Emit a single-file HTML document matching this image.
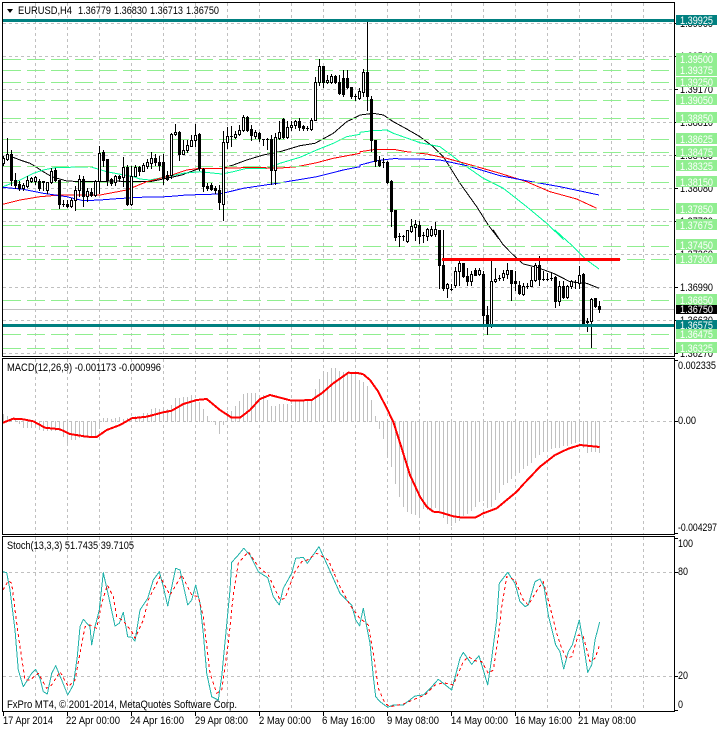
<!DOCTYPE html>
<html lang="en">
<head>
<meta charset="utf-8">
<title>EURUSD,H4</title>
<style>
html,body{margin:0;padding:0;background:#fff;width:717px;height:729px;overflow:hidden}
svg{display:block;position:absolute;left:0;top:0}
text{font-family:"Liberation Sans",sans-serif;font-size:11px;fill:#000}
.w{fill:#fff}
</style>
</head>
<body>
<svg id="s" xmlns="http://www.w3.org/2000/svg" width="717" height="729" viewBox="0 0 717 729">
<g id="grid"></g>
<g id="ma"></g>
<g id="levels"></g>
<g id="candles"></g>
<g id="over"></g>
<g id="frame"></g>

<polygon points="7,9 13,9 10,13" fill="#000"/>
<text x="18" y="14" textLength="54" lengthAdjust="spacingAndGlyphs">EURUSD,H4</text>
<text x="78" y="14" textLength="33" lengthAdjust="spacingAndGlyphs">1.36779</text>
<text x="114" y="14" textLength="33" lengthAdjust="spacingAndGlyphs">1.36830</text>
<text x="150" y="14" textLength="33" lengthAdjust="spacingAndGlyphs">1.36713</text>
<text x="186" y="14" textLength="33" lengthAdjust="spacingAndGlyphs">1.36750</text>

<text x="680" y="27" textLength="33" lengthAdjust="spacingAndGlyphs">1.39900</text>
<text x="680" y="60" textLength="33" lengthAdjust="spacingAndGlyphs">1.39540</text>
<text x="680" y="93" textLength="33" lengthAdjust="spacingAndGlyphs">1.39170</text>
<text x="680" y="126" textLength="33" lengthAdjust="spacingAndGlyphs">1.38810</text>
<text x="680" y="159" textLength="33" lengthAdjust="spacingAndGlyphs">1.38450</text>
<text x="680" y="192" textLength="33" lengthAdjust="spacingAndGlyphs">1.38080</text>
<text x="680" y="225" textLength="33" lengthAdjust="spacingAndGlyphs">1.37720</text>
<text x="680" y="258" textLength="33" lengthAdjust="spacingAndGlyphs">1.37360</text>
<text x="680" y="291" textLength="33" lengthAdjust="spacingAndGlyphs">1.36990</text>
<text x="680" y="324" textLength="33" lengthAdjust="spacingAndGlyphs">1.36630</text>
<text x="680" y="357" textLength="33" lengthAdjust="spacingAndGlyphs">1.36270</text>

<rect x="676" y="15" width="41" height="10" fill="#008080"/>
<rect x="676" y="53" width="41" height="12" fill="#90ee90"/>
<rect x="676" y="65" width="41" height="11" fill="#90ee90"/>
<rect x="676" y="77" width="41" height="10" fill="#90ee90"/>
<rect x="676" y="94" width="41" height="11" fill="#90ee90"/>
<rect x="676" y="112" width="41" height="11" fill="#90ee90"/>
<rect x="676" y="133" width="41" height="11" fill="#90ee90"/>
<rect x="676" y="146" width="41" height="11" fill="#90ee90"/>
<rect x="676" y="160" width="41" height="11" fill="#90ee90"/>
<rect x="676" y="176" width="41" height="11" fill="#90ee90"/>
<rect x="676" y="203" width="41" height="11" fill="#90ee90"/>
<rect x="676" y="219" width="41" height="11" fill="#90ee90"/>
<rect x="676" y="239" width="41" height="11" fill="#90ee90"/>
<rect x="676" y="253" width="41" height="11" fill="#90ee90"/>
<rect x="676" y="294" width="41" height="11" fill="#90ee90"/>
<rect x="676" y="305" width="41" height="9" fill="#000"/>
<rect x="676" y="329" width="41" height="10" fill="#90ee90"/>
<rect x="676" y="342" width="41" height="11" fill="#90ee90"/>
<rect x="676" y="320" width="41" height="9" fill="#008080"/>

<text class="w" x="680" y="24" textLength="33" lengthAdjust="spacingAndGlyphs">1.39925</text>
<text class="w" x="680" y="63" textLength="33" lengthAdjust="spacingAndGlyphs">1.39500</text>
<text class="w" x="680" y="74" textLength="33" lengthAdjust="spacingAndGlyphs">1.39375</text>
<text class="w" x="680" y="86" textLength="33" lengthAdjust="spacingAndGlyphs">1.39250</text>
<text class="w" x="680" y="104" textLength="33" lengthAdjust="spacingAndGlyphs">1.39050</text>
<text class="w" x="680" y="122" textLength="33" lengthAdjust="spacingAndGlyphs">1.38850</text>
<text class="w" x="680" y="143" textLength="33" lengthAdjust="spacingAndGlyphs">1.38625</text>
<text class="w" x="680" y="156" textLength="33" lengthAdjust="spacingAndGlyphs">1.38475</text>
<text class="w" x="680" y="170" textLength="33" lengthAdjust="spacingAndGlyphs">1.38325</text>
<text class="w" x="680" y="186" textLength="33" lengthAdjust="spacingAndGlyphs">1.38150</text>
<text class="w" x="680" y="213" textLength="33" lengthAdjust="spacingAndGlyphs">1.37850</text>
<text class="w" x="680" y="229" textLength="33" lengthAdjust="spacingAndGlyphs">1.37675</text>
<text class="w" x="680" y="249" textLength="33" lengthAdjust="spacingAndGlyphs">1.37450</text>
<text class="w" x="680" y="263" textLength="33" lengthAdjust="spacingAndGlyphs">1.37300</text>
<text class="w" x="680" y="304" textLength="33" lengthAdjust="spacingAndGlyphs">1.36850</text>
<text class="w" x="680" y="313" textLength="33" lengthAdjust="spacingAndGlyphs">1.36750</text>
<text class="w" x="680" y="338" textLength="33" lengthAdjust="spacingAndGlyphs">1.36475</text>
<text class="w" x="680" y="352" textLength="33" lengthAdjust="spacingAndGlyphs">1.36325</text>
<text class="w" x="680" y="329" textLength="33" lengthAdjust="spacingAndGlyphs">1.36575</text>

<text x="7" y="371" textLength="154" lengthAdjust="spacingAndGlyphs">MACD(12,26,9) -0.001173 -0.000996</text>
<text x="678" y="369" textLength="38" lengthAdjust="spacingAndGlyphs">0.002335</text>
<text x="678" y="424" textLength="18" lengthAdjust="spacingAndGlyphs">0.00</text>
<text x="678" y="531" textLength="39" lengthAdjust="spacingAndGlyphs">-0.004297</text>

<text x="7" y="549" textLength="127" lengthAdjust="spacingAndGlyphs">Stoch(13,3,3) 51.7435 39.7105</text>
<text x="7" y="708" textLength="230" lengthAdjust="spacingAndGlyphs">FxPro MT4, © 2001-2014, MetaQuotes Software Corp.</text>
<text x="678" y="547" textLength="15" lengthAdjust="spacingAndGlyphs">100</text>
<text x="678" y="575" textLength="10" lengthAdjust="spacingAndGlyphs">80</text>
<text x="678" y="679" textLength="10" lengthAdjust="spacingAndGlyphs">20</text>
<text x="678" y="708" textLength="5" lengthAdjust="spacingAndGlyphs">0</text>

<text x="3" y="724" textLength="50" lengthAdjust="spacingAndGlyphs">17 Apr 2014</text>
<text x="66" y="724" textLength="54" lengthAdjust="spacingAndGlyphs">22 Apr 00:00</text>
<text x="130" y="724" textLength="54" lengthAdjust="spacingAndGlyphs">24 Apr 16:00</text>
<text x="195" y="724" textLength="53" lengthAdjust="spacingAndGlyphs">29 Apr 08:00</text>
<text x="259" y="724" textLength="52" lengthAdjust="spacingAndGlyphs">2 May 00:00</text>
<text x="322" y="724" textLength="53" lengthAdjust="spacingAndGlyphs">6 May 16:00</text>
<text x="387" y="724" textLength="52" lengthAdjust="spacingAndGlyphs">9 May 08:00</text>
<text x="451" y="724" textLength="57" lengthAdjust="spacingAndGlyphs">14 May 00:00</text>
<text x="515" y="724" textLength="57" lengthAdjust="spacingAndGlyphs">16 May 16:00</text>
<text x="578" y="724" textLength="58" lengthAdjust="spacingAndGlyphs">21 May 08:00</text>
</svg>
<script>
(function(){
var NS="http://www.w3.org/2000/svg";
function E(parent,tag,attrs){var e=document.createElementNS(NS,tag);for(var k in attrs)e.setAttribute(k,attrs[k]);document.getElementById(parent).appendChild(e);return e;}
function R(p,x,y,w,h,f){return E(p,"rect",{x:x,y:y,width:w,height:h,fill:f});}
function HL(p,y,x1,x2,c,d){var a={x1:x1,y1:y+.5,x2:x2,y2:y+.5,stroke:c,"stroke-width":1,"shape-rendering":"crispEdges"};if(d)a["stroke-dasharray"]=d;return E(p,"line",a);}
function VL(p,x,y1,y2,c,d){var a={x1:x+.5,y1:y1,x2:x+.5,y2:y2,stroke:c,"stroke-width":1,"shape-rendering":"crispEdges"};if(d)a["stroke-dasharray"]=d;return E(p,"line",a);}
var G="#c0c0c0";
/* vertical grid */
for(var i=0;i<20;i++){var x=35+32*i;
  VL("grid",x,3,356,G,"3 3");VL("grid",x,359,534,G,"3 3");VL("grid",x,537,711,G,"3 3");}
/* horizontal grid */
[23,56,89,122,155,188,221,254,287,320,353].forEach(function(y){HL("grid",y,3,674,G,"3 3");});
HL("grid",421,3,674,G,"3 3");HL("grid",572,3,674,G,"3 3");HL("grid",676,3,674,G,"3 3");
/* last-price line */
HL("grid",309,3,674,G);

/* polylines: segments given in 3x zoom coordinates */
function PL(p,segs,color,w,dash,crisp){
  var pts=[];
  segs.forEach(function(s){var a=s[0],dx=s[1],dy=s[2];
    for(var i=0;i<a.length;i+=2)pts.push(((a[i]+dx)/3).toFixed(1)+","+((a[i+1]+dy)/3).toFixed(1));});
  var at={points:pts.join(" "),fill:"none",stroke:color,"stroke-width":w,"stroke-linejoin":"round"};
  if(dash)at["stroke-dasharray"]=dash;
  if(crisp)at["shape-rendering"]="crispEdges";
  return E(p,"polyline",at);
}
var Z=1080;
PL("ma",[[[35,470,60,480,90,490,107,500,130,515,155,530,200,543,250,545,290,545,340,543,400,545,450,545,500,535,545,525,600,505,665,505,700,495,740,480,790,465,840,455,900,437,945,430,1000,400,1040,365,1075,348],0,0],
 [[0,345,40,340,70,345,100,365,140,387,180,410,220,440,250,470,275,510,300,550,350,620,385,675,415,715],Z,0],
 [[400,0,430,45,465,80,490,102,530,112,580,130,630,155,680,160,717,175],Z,690]],"#000",1,null,true);
PL("ma",[[[9,560,60,540,100,520,130,510,165,503,270,500,320,515,400,530,420,537,450,540,500,530,550,520,600,515,665,522,700,515,740,505,800,505,840,490,900,472,950,450,1000,430,1040,410,1080,403],0,0],
 [[0,397,40,392,80,390,100,400,180,428,240,440,280,470,320,500,370,535,430,565,500,620,560,670,610,718],Z,0],
 [[585,0,640,50,680,90,717,117],Z,690]],"#00fa9a",1,null,true);
PL("ma",[[[9,613,60,600,120,590,180,585,300,585,380,570,440,545,500,530,560,510,600,505,665,505,770,502,830,505,890,500,950,488,1000,475,1080,460],0,0],
 [[0,455,40,449,100,448,140,455,200,462,260,475,340,497,420,520,500,545,570,575,650,597,710,625],Z,0]],"#f00",1,null,true);
PL("ma",[[[9,562,70,568,130,580,200,590,250,602,300,600,350,596,420,592,500,590,560,585,660,582,730,565,843,548,867,544,950,530,1030,510,1080,500],0,0],
 [[0,495,50,482,100,476,180,477,240,480,320,497,420,527,520,546,600,560,717,585],Z,0]],"#00f",1,null,true);

/* green level lines */
[59,70,82,100,118,139,152,166,182,209,225,246,259,300,334,348].forEach(function(y){HL("levels",y,3,674,"#90ee90","18 6");});

/* candles: [wickTop, bodyTop, bodyBottom, wickBottom, isWhite] in 3x zoom y units */
var C=[
[470,475,490,495,1],[415,463,478,480,1],[452,463,540,555,0],[520,540,556,565,0],[545,552,565,570,0],[550,555,565,570,1],[530,540,558,562,1],[533,535,545,548,1],[530,533,545,553,1],[538,543,565,570,0],
[545,545,548,570,0],[546,546,570,580,1],[505,515,548,550,1],[505,512,542,545,0],[540,540,614,625,0],[600,612,612,620,0],[600,613,618,622,0],[595,600,618,622,1],[560,570,600,632,1],[525,538,570,590,1],
[530,538,590,620,0],[565,575,590,605,1],[565,576,585,590,0],[540,545,585,590,1],[440,460,545,580,1],[452,457,480,500,0],[478,478,540,555,0],[535,538,550,555,0],[525,530,548,555,1],[525,530,535,545,0],
[472,503,532,560,1],[497,501,612,615,0],[498,528,612,615,1],[495,503,528,530,1],[498,503,515,525,0],[490,495,515,515,1],[478,488,498,505,1],[458,475,490,505,1],[462,475,488,495,0],[470,487,497,510,0],
[462,487,535,552,0],[515,525,537,540,0],[400,403,525,535,1],[372,397,403,405,1],[395,397,463,480,0],[420,452,462,462,1],[420,435,452,458,1],[405,420,438,440,1],[372,405,422,440,1],[400,403,505,512,0],
[505,507,560,575,0],[550,558,564,570,0],[550,556,568,570,0],[560,565,572,580,0],[555,572,606,628,0],[395,428,613,662,1],[382,410,428,445,1],[380,408,410,440,0],[395,403,411,415,1],[375,390,403,405,1],
[345,353,392,395,1],[348,353,390,395,0],[375,388,405,420,0],[392,398,408,415,1],[398,400,416,425,0],[418,418,418,435,0],[415,418,418,448,0],[405,417,512,552,0],[400,413,512,552,1],[365,398,415,418,1],
[355,357,413,415,0],[365,381,413,415,1],[365,375,382,392,1],[360,363,377,385,1],[355,363,383,390,0],[375,380,386,392,0],[378,385,385,392,0],[355,360,388,390,1],[232,246,362,362,1],[178,198,248,255,1],
[198,198,248,263,0],[225,240,248,250,1],[222,228,248,250,1],[225,228,248,250,0],[225,248,280,282,0],[212,235,283,290,0],[212,235,262,265,0],[262,262,290,295,0],[282,290,290,300,0],[265,275,295,298,1],
[208,216,278,290,1],[60,216,290,332,0],[290,297,422,455,0],[420,420,483,500,0],[468,480,495,500,0],[475,488,488,503,0],[485,487,548,550,0],[542,545,635,678,0],[630,630,711,720,0],[699,708,708,738,0],
[705,708,708,720,0],[690,690,723,726,1],[657,678,693,696,1],[660,672,681,720,1],[663,675,708,729,0],[696,705,705,726,0],[684,687,708,720,1],[678,687,705,708,1],[666,687,702,708,1],[690,690,795,864,0],
[690,795,864,870,0],[849,853,865,893,1],[853,868,868,872,0],[802,815,855,862,1],[778,790,815,855,1],[790,790,830,833,0],[805,830,845,855,0],[815,822,845,855,1],[805,812,825,827,0],[805,812,823,825,1],
[815,822,945,975,0],[920,945,980,1003,0],[775,843,980,983,1],[805,837,845,847,1],[825,835,835,840,0],[810,820,833,840,1],[790,812,823,835,1],[810,812,850,902,0],[815,845,850,870,0],[845,855,880,883,0],
[850,860,883,885,1],[850,858,858,865,0],[802,840,858,860,1],[790,797,842,845,1],[768,797,837,857,0],[815,837,837,840,0],[820,837,837,842,0],[818,835,835,840,0],[830,832,905,922,0],[845,860,905,915,1],
[845,860,893,895,0],[855,858,893,895,1],[840,845,860,865,1],[840,848,848,865,0],[798,825,850,865,1],[820,823,973,975,0],[955,963,967,995,0],[895,897,965,1043,1],[895,895,920,922,0],[905,920,928,938,0]
];
C.forEach(function(c,k){
  var x=3+4*k,t=Math.floor(c[0]/3),a=Math.floor(c[1]/3),b=Math.floor(c[2]/3),d=Math.floor(c[3]/3);
  if(d>t)R("candles",x,t,1,d-t+1,"#000");
  var h=Math.max(1,b-a+1);
  R("candles",x-1,a,3,h,"#000");
  if(c[4]&&h>2)R("candles",x,a+1,1,h-2,"#fff");
});

/* teal and red objects */
R("over",3,19,672,3,"#008080");
R("over",3,324,672,3,"#008080");
R("over",442,258,178,3,"#f00");

/* MACD histogram */
var H=[192,198,205,208,218,232,232,232,225,238,240,240,240,240,240,258,278,268,266,262,262,260,258,255,235,205,203,207,205,200,207,205,200,198,198,190,188,178,175,178,172,178,165,145,145,142,142,135,148,155,178,197,212,222,248,222,183,183,168,153,132,128,128,128,135,135,150,167,167,162,162,162,165,150,150,150,150,150,118,88,72,65,55,55,62,65,68,72,68,90,
95,108,150,198,233,263,313,348,400,437,468,483,490,492,495,475,478,478,470,480,500,520,525,515,510,495,490,480,467,453,450,470,468,447,425,403,395,383,373,365,353,345,335,322,312,302,295,295,290,292,285,285,280,275,272,290,305,303,303,305];
H.forEach(function(z,k){
  var y=350+Math.round(z/3),x=3+4*k,top=Math.min(y,421),bot=Math.max(y,421);
  R("ma",x,top,1,bot-top+1,"#c0c0c0");
});
var g="ma";
PL(g,[[[9,218,40,206,70,208,100,214,135,233,180,238,210,252,260,260,290,261,320,240,360,225,395,205,440,200,490,187,515,182,550,162,590,150,620,147,660,180,695,203,720,203,750,180,780,147,810,135,875,152,935,150,965,130,1000,100,1045,68,1079,70],0,1050],
 [[10,73,30,90,55,125,80,175,100,215,125,295,150,375,180,440,200,470,220,485,240,487,280,499,310,503,345,503,370,490,410,475,470,425,490,403,540,350,585,315,625,296,660,285,690,288,719,291],Z,1050]],"#f00",2,null,true);

/* Stochastic */
PL(g,[[[9,125,20,128,30,180,45,300,55,420,70,470,95,430,107,418,120,445,130,485,142,492,155,430,167,407,185,450,203,495,220,465,232,380,240,290,250,268,270,290,275,345,285,290,298,240,310,128,325,195,345,288,358,280,370,247,383,320,395,322,405,333,420,240,443,205,460,150,478,125,490,170,503,228,527,115,540,120,563,225,575,210,587,165,600,220,610,310,620,430,635,500,655,510,665,440,690,180,695,97,715,75,731,55,750,75,775,125,803,143,820,200,838,225,850,175,875,130,887,85,910,82,922,100,957,50,975,90,1020,190,1055,225,1067,270,1079,288],0,1590],
 [[0,280,10,235,20,290,30,340,40,440,47,500,60,515,83,532,100,525,130,525,165,498,190,495,215,470,235,448,250,460,275,480,300,385,310,367,335,403,357,377,370,420,383,465,395,385,410,270,418,160,443,127,465,160,480,215,495,230,505,225,525,155,540,147,552,170,565,255,587,345,600,365,611,417,625,365,637,345,658,270,670,340,683,427,695,405,705,330,719,276],Z,1590]],"#20b2aa",1,null,true);
PL(g,[[[9,180,25,152,35,160,50,280,60,350,75,450,90,450,115,430,140,475,155,465,180,425,205,470,225,450,240,370,255,290,270,285,290,295,305,220,322,165,340,200,350,260,370,272,395,305,405,325,430,270,445,210,480,140,510,195,525,170,545,135,575,195,595,200,610,260,630,430,650,490,665,480,685,340,700,195,715,100,745,65,775,110,805,135,840,210,855,205,885,125,905,95,922,90,950,70,985,90,1020,170,1050,225,1079,265],0,1590],
 [[0,265,25,285,40,370,55,475,75,520,90,530,130,522,170,505,195,495,225,465,250,458,280,465,310,395,325,380,345,392,365,395,385,430,400,420,415,320,425,230,440,140,465,150,490,210,505,225,535,175,550,155,570,230,590,310,605,355,620,385,635,380,655,315,670,320,690,395,705,385,719,345],Z,1590]],"#f00",1,"3 3",true);

/* frames */
var K="#000";
[[2,356],[358,534],[536,711]].forEach(function(f){
  HL("frame",f[0],2,675,K);HL("frame",f[1],2,675,K);
  VL("frame",2,f[0],f[1]+1,K);VL("frame",674,f[0],f[1]+1,K);
});
/* right ticks */
[23,56,89,122,155,188,221,254,287,320,353,421,572,676,360,533,538,710].forEach(function(y){HL("frame",y,675,678,K);});
/* bottom ticks */
for(var j=0;j<10;j++){VL("frame",3+64*j,712,716,K);}
})();
</script>
</body>
</html>
